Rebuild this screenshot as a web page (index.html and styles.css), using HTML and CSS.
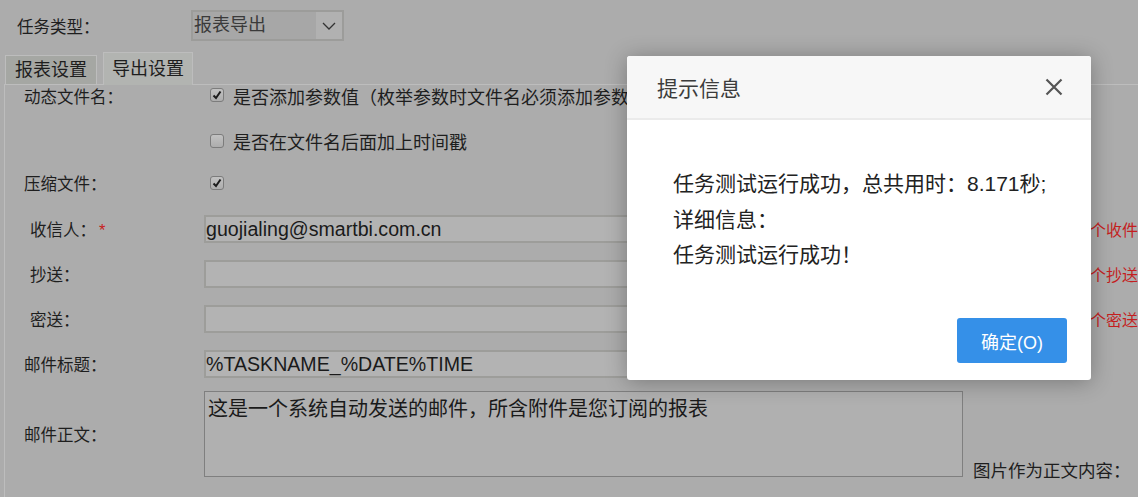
FILE: index.html
```html
<!DOCTYPE html>
<html lang="zh-CN">
<head>
  <meta charset="UTF-8">
  <title>任务设置</title>
  <link rel="stylesheet" href="styles.css">
</head>
<body>

<div class="task-head">
  <span class="task-head-label">任务类型<span class="colon">：</span></span>
  <div class="task-select">
    <span class="task-select-value">报表导出</span>
    <span class="task-select-arrow">
      <svg width="14" height="8" viewBox="0 0 14 8"><path d="M1 1 L7 7 L13 1" fill="none" stroke="#333" stroke-width="1.3"/></svg>
    </span>
  </div>
</div>

<div class="task-tabs">
  <span class="task-tab">报表设置</span>
  <span class="task-tab active">导出设置</span>
</div>

<div class="task-panel">
  <div class="task-row row-first">
    <span class="task-label">动态文件名<span class="colon">：</span></span>
    <div class="task-field">
      <span class="task-check checked"><svg width="12" height="12" viewBox="0 0 12 12"><path d="M2.5 6.5 L5 9 L9.5 2.5" fill="none" stroke="#1c1c1c" stroke-width="2"/></svg></span>
      是否添加参数值（枚举参数时文件名必须添加参数值）
    </div>
  </div>

  <div class="task-row row-second">
    <span class="task-label"></span>
    <div class="task-field">
      <span class="task-check"></span>
      是否在文件名后面加上时间戳
    </div>
  </div>

  <div class="task-row row-third">
    <span class="task-label">压缩文件<span class="colon">：</span></span>
    <div class="task-field">
      <span class="task-check checked"><svg width="12" height="12" viewBox="0 0 12 12"><path d="M2.5 6.5 L5 9 L9.5 2.5" fill="none" stroke="#1c1c1c" stroke-width="2"/></svg></span>
    </div>
  </div>

  <div class="task-row">
    <span class="task-label indent">收信人<span class="colon">：</span><span class="task-star">*</span></span>
    <div class="task-input">guojialing@smartbi.com.cn</div>
    <span class="task-extra red">请用分号分隔多个收件人</span>
  </div>

  <div class="task-row">
    <span class="task-label indent">抄送<span class="colon">：</span></span>
    <div class="task-input"></div>
    <span class="task-extra red">请用分号分隔多个抄送人</span>
  </div>

  <div class="task-row">
    <span class="task-label indent">密送<span class="colon">：</span></span>
    <div class="task-input"></div>
    <span class="task-extra red">请用分号分隔多个密送人</span>
  </div>

  <div class="task-row">
    <span class="task-label">邮件标题<span class="colon">：</span></span>
    <div class="task-input">%TASKNAME_%DATE%TIME</div>
  </div>

  <div class="task-row row-body">
    <span class="task-label">邮件正文<span class="colon">：</span></span>
    <div class="task-textarea">这是一个系统自动发送的邮件，所含附件是您订阅的报表</div>
    <span class="task-extra bottom">图片作为正文内容<span class="colon">：</span></span>
  </div>
</div>

<div class="task-dialog">
  <div class="dialog-head">
    <span class="dialog-title">提示信息</span>
    <svg class="dialog-close" width="18" height="18" viewBox="0 0 18 18"><path d="M1.5 1.5 L16.5 16.5 M16.5 1.5 L1.5 16.5" stroke="#555" stroke-width="2.2"/></svg>
  </div>
  <div class="dialog-body">
    <div>任务测试运行成功，总共用时：8.171秒;</div>
    <div>详细信息：</div>
    <div>任务测试运行成功！</div>
  </div>
  <div class="dialog-foot">
    <span class="dialog-btn">确定(O)</span>
  </div>
</div>

</body>
</html>
```

FILE: styles.css
```css
body {
  margin: 0;
  width: 1138px;
  height: 497px;
  overflow: hidden;
  position: relative;
  background: #acacac;
  font-family: "Liberation Sans", "Noto Sans CJK SC", sans-serif;
  font-size: 16.5px;
  color: #1e1e1e;
}

/* centred full-width colon, as the original font draws it */
.colon {
  font-family: "Noto Sans CJK TC", sans-serif;
}

.task-head {
  display: flex;
  align-items: center;
  padding: 10px 0 0 17px;
}

.task-head-label {
  width: 174px;
}

.task-select {
  display: flex;
  width: 153px;
  height: 31px;
  box-sizing: border-box;
  border: 2px solid #9c9c9a;
  background: #a7a7a7;
}

.task-select-value {
  flex: 1;
  padding-left: 1px;
  font-size: 18px;
  line-height: 27px;
  color: #3a3a3a;
}

.task-select-arrow {
  display: flex;
  align-items: center;
  justify-content: center;
  width: 26px;
  background: #b1b1b1;
}

.task-tabs {
  display: flex;
  align-items: flex-end;
  gap: 6px;
  margin-top: 11px;
  margin-bottom: -1px;
  padding-left: 5px;
}

.task-tab {
  position: relative;
  height: 30px;
  box-sizing: border-box;
  padding: 0 9px;
  border: 1px solid #bdbdbd;
  background: #a5a7a3;
  font-size: 18px;
  line-height: 28px;
}

.task-tab.active {
  height: 33px;
  padding: 0 8px;
  border-bottom: none;
  background: #b2b4b1;
  line-height: 33px;
}

.task-panel {
  margin-left: 4px;
  height: 420px;
  border-top: 1px solid #bdbdbd;
  border-left: 1px solid #bdbdbd;
}

.task-row {
  display: flex;
  align-items: center;
  height: 28px;
  margin-top: 17px;
}

.task-row.row-first {
  height: 22px;
  margin-top: 0;
}

.task-row.row-second {
  height: 30px;
  margin-top: 19px;
}

.task-row.row-third {
  height: 30px;
  margin-top: 12px;
}

.task-row.row-body {
  height: 86px;
  margin-top: 13px;
}

.task-label {
  width: 199px;
  flex-shrink: 0;
  box-sizing: border-box;
  padding-left: 19px;
}

.task-label.indent {
  padding-left: 25px;
}

.task-star {
  margin-left: 3px;
  color: #c81d1d;
}

.task-field {
  display: flex;
  align-items: center;
  padding-left: 6px;
  font-size: 18px;
  white-space: nowrap;
}

.row-first .task-check {
  margin-top: -3px;
}

.task-check {
  display: inline-flex;
  align-items: center;
  justify-content: center;
  width: 14px;
  height: 14px;
  margin-right: 9px;
  box-sizing: border-box;
  border: 1px solid #7c7c7c;
  border-radius: 3px;
  background: linear-gradient(#c2c2c2, #adadad);
}

.task-input {
  width: 759px;
  height: 28px;
  flex-shrink: 0;
  box-sizing: border-box;
  border: 2px solid #9d9d9a;
  background: #b3b3b3;
  font-size: 19.6px;
  line-height: 24px;
  color: #1a1a1a;
}

.task-textarea {
  width: 759px;
  height: 86px;
  flex-shrink: 0;
  box-sizing: border-box;
  padding: 3px;
  border: 1px solid #7f7f7f;
  background: #b0b0b0;
  font-size: 20px;
  line-height: 28px;
  color: #1a1a1a;
  align-self: flex-start;
}

.task-extra {
  margin-left: 10px;
  white-space: nowrap;
}

.task-extra.red {
  padding-left: 5px;
  font-size: 16px;
  color: #c41f1f;
}

.task-extra.bottom {
  align-self: flex-end;
  font-size: 17.5px;
  line-height: 22px;
  margin-bottom: -5px;
}

.task-dialog {
  position: absolute;
  left: 627px;
  top: 56px;
  width: 464px;
  height: 324px;
  display: flex;
  flex-direction: column;
  background: #fff;
  border-radius: 3px;
  box-shadow: 0 2px 22px rgba(0, 0, 0, 0.3);
}

.dialog-head {
  display: flex;
  align-items: center;
  justify-content: space-between;
  height: 62px;
  padding: 0 28px 0 30px;
  background: #f7f7f7;
  border-bottom: 2px solid #ebebeb;
  border-radius: 3px 3px 0 0;
}

.dialog-title {
  font-size: 21px;
  color: #3c3c3c;
}

.dialog-body {
  flex: 1;
  padding: 46px 20px 0 46px;
  font-size: 21px;
  line-height: 35.5px;
  color: #222;
}

.dialog-foot {
  display: flex;
  justify-content: flex-end;
  padding: 0 24px 17px;
}

.dialog-btn {
  display: inline-flex;
  align-items: center;
  justify-content: center;
  width: 110px;
  height: 45px;
  border-radius: 3px;
  background: #3590e8;
  color: #fff;
  font-size: 18px;
}
```
